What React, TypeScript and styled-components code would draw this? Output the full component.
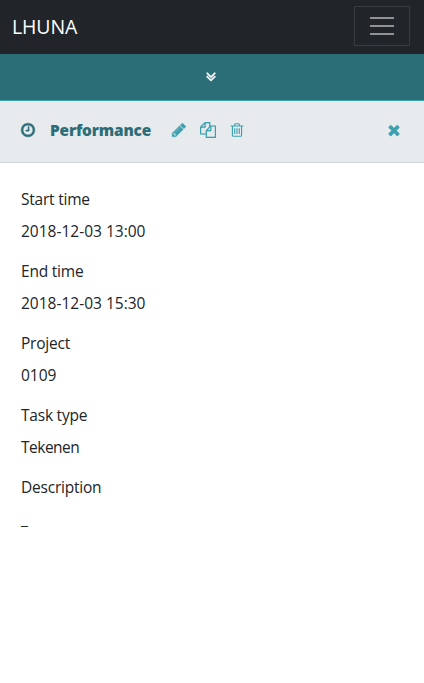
import React from 'react';
import styled, { createGlobalStyle } from 'styled-components';

const GlobalStyle = createGlobalStyle`
  *, *::before, *::after { box-sizing: border-box; }
  body {
    margin: 0;
    background: #fff;
    color: #212529;
    font-family: 'Open Sans', 'Noto Sans', sans-serif;
    font-size: 15.5px;
    line-height: 24px;
  }
`;

const Page = styled.div`
  min-height: 683px;
  background: #fff;
`;

const Navbar = styled.nav`
  display: flex;
  align-items: center;
  justify-content: space-between;
  height: 54px;
  padding: 0 14px 2px 12px;
  background: #212529;
`;

const Brand = styled.a`
  padding-top: 2px;
  color: #fff;
  font-size: 19.5px;
  letter-spacing: -0.1px;
  line-height: 30px;
  text-decoration: none;
`;

const Toggler = styled.button`
  display: flex;
  flex-direction: column;
  align-items: center;
  justify-content: center;
  gap: 6px;
  width: 56px;
  height: 40px;
  padding: 0;
  border: 1px solid #383b3f;
  background: transparent;
`;

const TogglerBar = styled.span`
  width: 24px;
  height: 2px;
  background: #909294;
`;

const ExpandBar = styled.button`
  display: flex;
  align-items: center;
  justify-content: center;
  width: 100%;
  height: 47px;
  padding: 0 2px 0 0;
  border: 0;
  border-bottom: 1px solid #3ba1b0;
  background: #2c6e78;
  color: #fff;
`;

const PanelHeader = styled.header`
  display: flex;
  align-items: center;
  height: 62px;
  padding: 0 22px 3px 20px;
  border-bottom: 1px solid #d0d2de;
  background: #e7ebee;
  color: #2c6e78;
`;

const Title = styled.h1`
  width: 102px;
  margin: 0 19px 0 14px;
  padding-top: 2px;
  font-size: 15.4px;
  font-weight: 800;
  line-height: 24px;
  letter-spacing: -0.18px;
  white-space: nowrap;
`;

const Actions = styled.div`
  display: flex;
  gap: 13px;
`;

const IconButton = styled.button<{ $end?: boolean }>`
  display: flex;
  margin: 0 0 0 ${({ $end }) => ($end ? 'auto' : '0')};
  padding: 0;
  border: 0;
  background: none;
  color: #3ba1b0;
`;

const Glyph = styled.svg<{ $weight: number }>`
  display: block;
  width: 16px;
  height: 16px;
  flex: none;
  fill: currentColor;
  stroke: currentColor;
  stroke-width: ${({ $weight }) => $weight};
`;

const Details = styled.dl`
  margin: 0;
  padding: 24px 21px;
`;

const Field = styled.div`
  margin-bottom: 16px;
`;

const Label = styled.dt`
  margin-bottom: 8px;
  letter-spacing: -0.22px;
`;

const Value = styled.dd<{ $text?: boolean }>`
  margin: 0;
  letter-spacing: ${({ $text }) => ($text ? '-0.5px' : '0')};
`;

const icons = {
  clock:
    'M1024 544v448q0 14-9 23t-23 9h-320q-14 0-23-9t-9-23v-64q0-14 9-23t23-9h224v-352q0-14 9-23t23-9h64q14 0 23 9t9 23zm416 352q0-148-73-273t-198-198-273-73-273 73-198 198-73 273 73 273 198 198 273 73 273-73 198-198 73-273zm224 0q0 209-103 385.5t-279.5 279.5-385.5 103-385.5-103-279.5-279.5-103-385.5 103-385.5 279.5-279.5 385.5-103 385.5 103 279.5 279.5 103 385.5z',
  pencil:
    'M491 1536l91-91-235-235-91 91v107h128v128h107zm523-928q0-22-22-22-10 0-17 7l-542 542q-7 7-7 17 0 22 22 22 10 0 17-7l542-542q7-7 7-17zm-54-192l416 416-832 832h-416v-416zm683 96q0 53-37 90l-166 166-416-416 166-165q36-38 90-38 53 0 91 38l235 234q37 39 37 91z',
  copy:
    'M1696 384q40 0 68 28t28 68v1216q0 40-28 68t-68 28h-960q-40 0-68-28t-28-68v-288h-544q-40 0-68-28t-28-68v-672q0-40 20-88t48-76l408-408q28-28 76-48t88-20h416q40 0 68 28t28 68v328q68-40 128-40h416zm-544 213l-299 299h299v-299zm-640-384l-299 299h299v-299zm196 647l316-316v-416h-384v416q0 40-28 68t-68 28h-416v640h512v-256q0-40 20-88t48-76zm956 804v-1152h-384v416q0 40-28 68t-68 28h-416v640h896z',
  trash:
    'M704 736v576q0 14-9 23t-23 9h-64q-14 0-23-9t-9-23v-576q0-14 9-23t23-9h64q14 0 23 9t9 23zm256 0v576q0 14-9 23t-23 9h-64q-14 0-23-9t-9-23v-576q0-14 9-23t23-9h64q14 0 23 9t9 23zm256 0v576q0 14-9 23t-23 9h-64q-14 0-23-9t-9-23v-576q0-14 9-23t23-9h64q14 0 23 9t9 23zm128 724v-948h-896v948q0 22 7 40.5t14.5 27 10.5 8.5h832q3 0 10.5-8.5t14.5-27 7-40.5zm-672-1076h448l-48-117q-7-9-17-11h-317q-10 2-17 11zm928 32v64q0 14-9 23t-23 9h-96v948q0 83-47 143.5t-113 60.5h-832q-66 0-113-58.5t-47-141.5v-952h-96q-14 0-23-9t-9-23v-64q0-14 9-23t23-9h309l70-167q15-37 54-63t79-26h320q40 0 79 26t54 63l70 167h309q14 0 23 9t9 23z',
  close:
    'M1490 1322q0 40-28 68l-136 136q-28 28-68 28t-68-28l-294-294-294 294q-28 28-68 28t-68-28l-136-136q-28-28-28-68t28-68l294-294-294-294q-28-28-28-68t28-68l136-136q28-28 68-28t68 28l294 294 294-294q28-28 68-28t68 28l136 136q28 28 28 68t-28 68l-294 294 294 294q28 28 28 68z',
  expand:
    'M1395 864q0 13-10 23l-466 466q-10 10-23 10t-23-10l-466-466q-10-10-10-23t10-23l50-50q10-10 23-10t23 10l393 393 393-393q10-10 23-10t23 10l50 50q10 10 10 23zm0-384q0 13-10 23l-466 466q-10 10-23 10t-23-10l-466-466q-10-10-10-23t10-23l50-50q10-10 23-10t23 10l393 393 393-393q10-10 23-10t23 10l50 50q10 10 10 23z',
};

const Icon = ({ name, weight = 0 }: { name: keyof typeof icons; weight?: number }) => (
  <Glyph viewBox="0 0 1792 1792" $weight={weight} aria-hidden="true">
    <path d={icons[name]} />
  </Glyph>
);

const fields = [
  { label: 'Start time', value: '2018-12-03 13:00' },
  { label: 'End time', value: '2018-12-03 15:30' },
  { label: 'Project', value: '0109' },
  { label: 'Task type', value: 'Tekenen', text: true },
  { label: 'Description', value: '_' },
];

export default function App() {
  return (
    <Page>
      <GlobalStyle />
      <Navbar>
        <Brand>LHUNA</Brand>
        <Toggler aria-label="Toggle navigation">
          <TogglerBar />
          <TogglerBar />
          <TogglerBar />
        </Toggler>
      </Navbar>
      <ExpandBar aria-label="Expand">
        <Icon name="expand" weight={70} />
      </ExpandBar>
      <PanelHeader>
        <Icon name="clock" weight={50} />
        <Title>Performance</Title>
        <Actions>
          <IconButton aria-label="Edit">
            <Icon name="pencil" weight={30} />
          </IconButton>
          <IconButton aria-label="Copy">
            <Icon name="copy" weight={20} />
          </IconButton>
          <IconButton aria-label="Delete">
            <Icon name="trash" />
          </IconButton>
        </Actions>
        <IconButton $end aria-label="Close">
          <Icon name="close" weight={50} />
        </IconButton>
      </PanelHeader>
      <Details>
        {fields.map(({ label, value, text }) => (
          <Field key={label}>
            <Label>{label}</Label>
            <Value $text={text}>{value}</Value>
          </Field>
        ))}
      </Details>
    </Page>
  );
}
